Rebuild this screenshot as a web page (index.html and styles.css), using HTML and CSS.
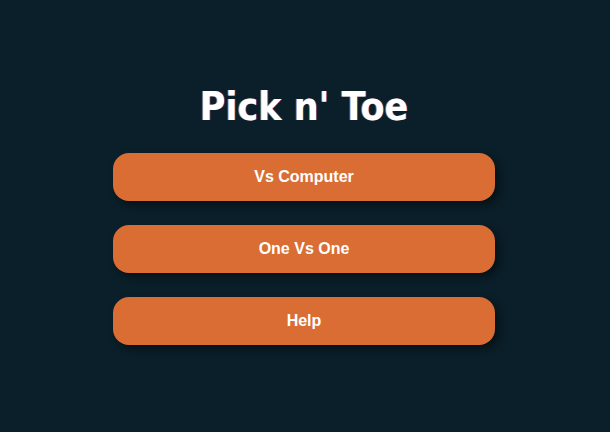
FILE: index.html
```html
<!DOCTYPE html>
<html>
<head>
<meta charset="utf-8">
<link rel="stylesheet" href="styles.css">
</head>
<body>
<main class="menu">
  <h1 class="title">Pick n' Toe</h1>
  <div class="buttons">
    <button class="btn">Vs Computer</button>
    <button class="btn">One Vs One</button>
    <button class="btn">Help</button>
  </div>
</main>
</body>
</html>
```
FILE: styles.css
```css
html, body {
  margin: 0;
  padding: 0;
  background: #0a1f29;
  height: 100%;
}
.menu {
  display: flex;
  flex-direction: column;
  align-items: center;
  padding-top: 84px;
  padding-right: 2px;
}
.title {
  margin: 0;
  font-family: "DejaVu Sans Condensed", "DejaVu Sans", sans-serif;
  font-stretch: condensed;
  font-weight: bold;
  font-size: 39px;
  line-height: 46px;
  color: #ffffff;
  text-shadow: -1px 0 0 rgba(230,150,60,0.6), 1px 0 0 rgba(60,60,200,0.5);
}
.buttons {
  margin-top: 23px;
  display: flex;
  flex-direction: column;
  gap: 24px;
}
.btn {
  width: 382px;
  height: 48px;
  border: none;
  border-radius: 16px;
  background: #da6d33;
  color: #ffffff;
  font-family: "Liberation Sans", Arial, sans-serif;
  font-weight: bold;
  font-size: 16px;
  box-shadow: 4px 4px 8px rgba(0,0,0,0.45);
  cursor: pointer;
}
```
